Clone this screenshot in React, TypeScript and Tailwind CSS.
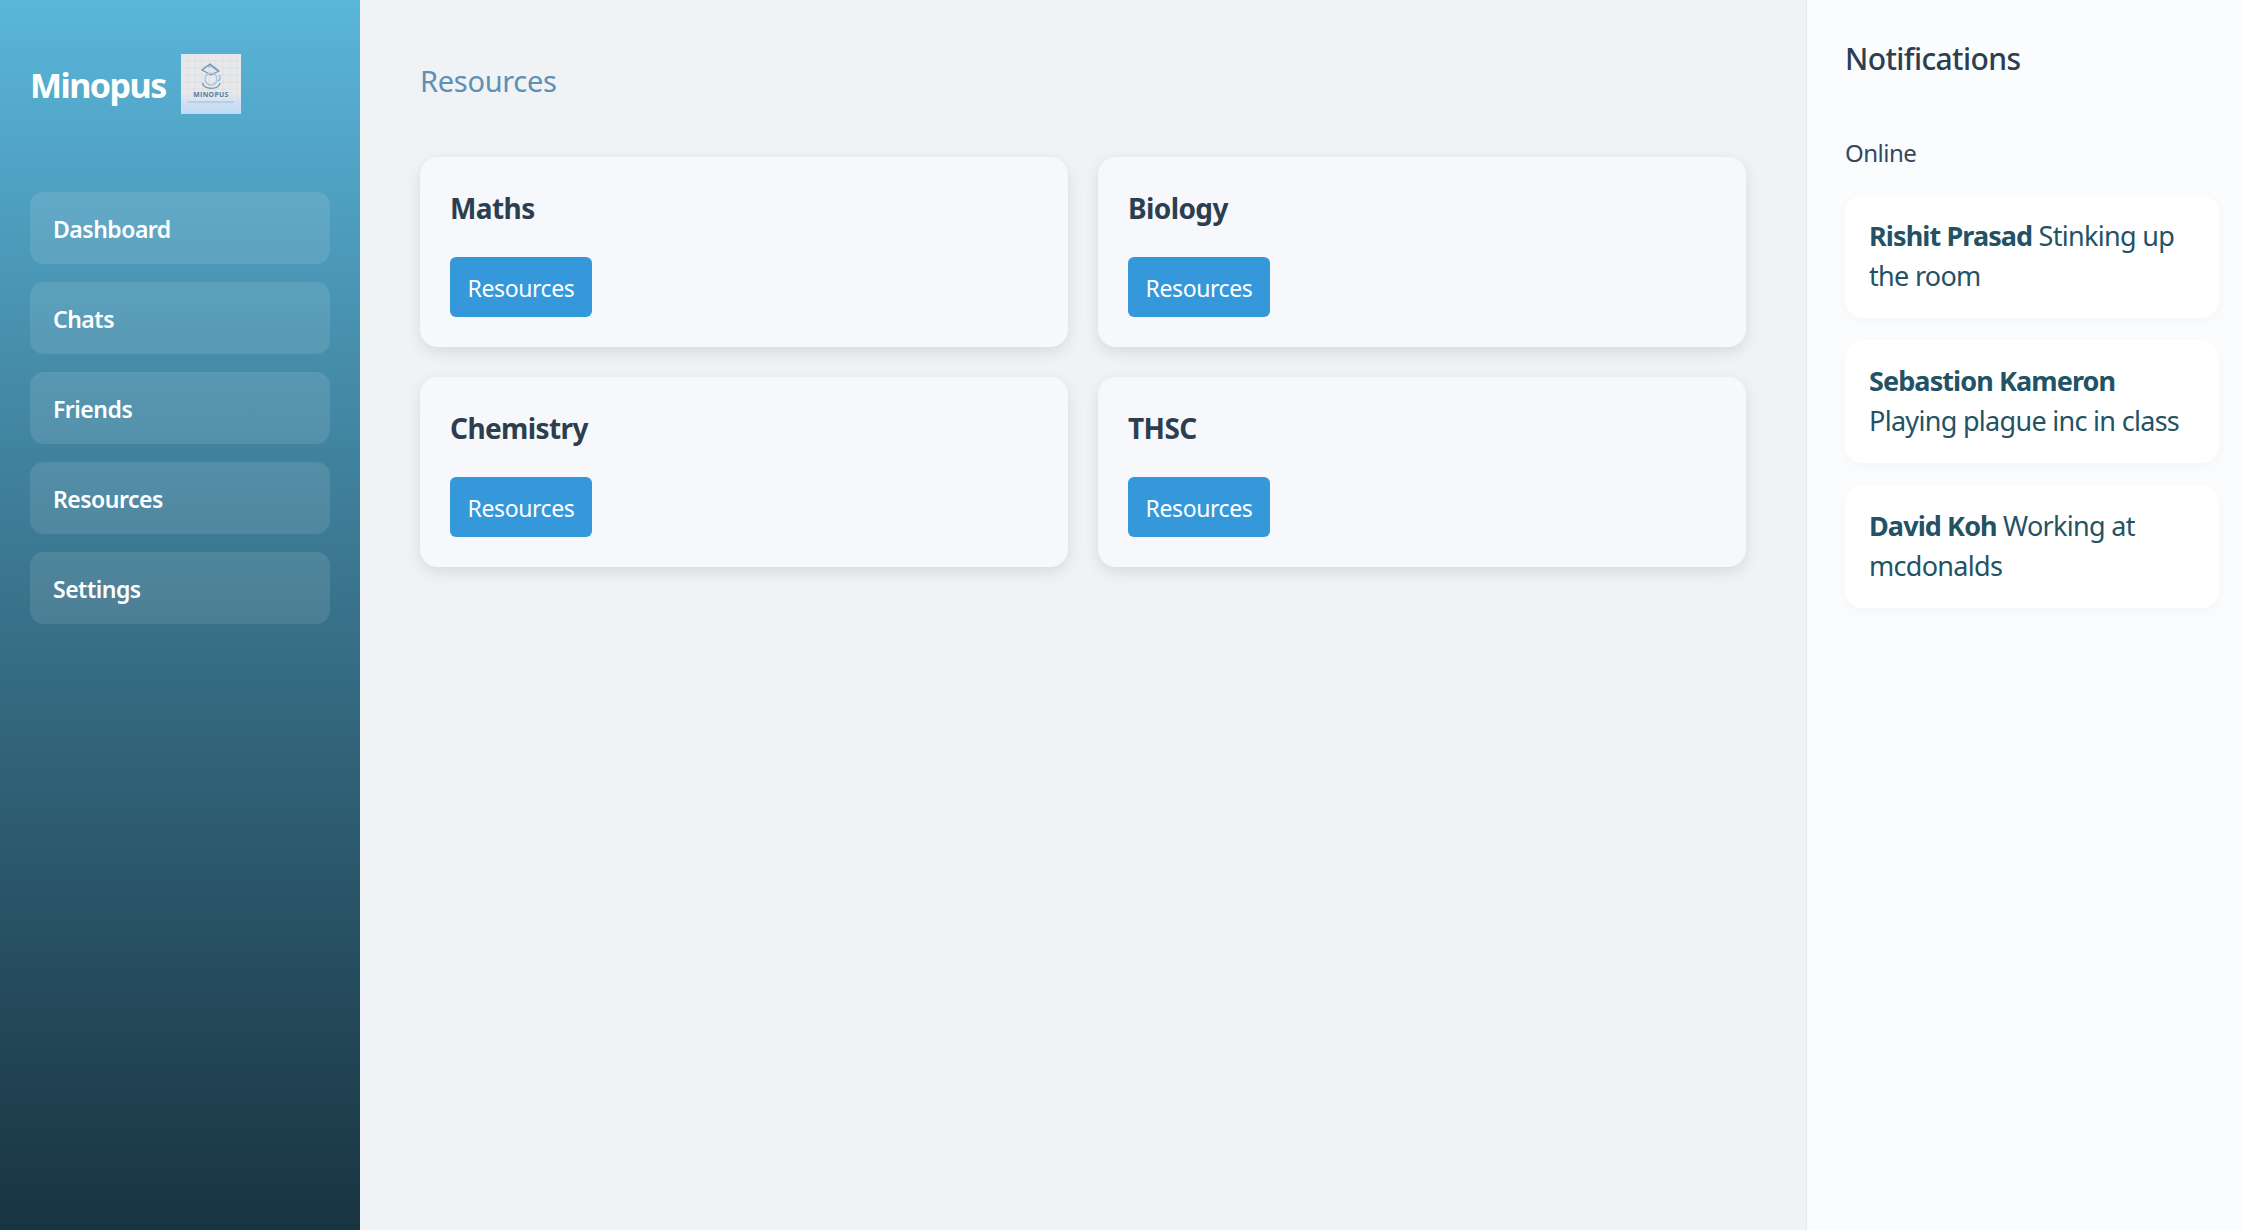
import React from 'react';

const navItems = ['Dashboard', 'Chats', 'Friends', 'Resources', 'Settings'];
const subjects = ['Maths', 'Biology', 'Chemistry', 'THSC'];
const online = [
  { name: 'Rishit Prasad', status: 'Stinking up the room' },
  { name: 'Sebastion Kameron', status: 'Playing plague inc in class' },
  { name: 'David Koh', status: 'Working at mcdonalds' },
];

const Logo: React.FC = () => (
  <svg width="60" height="60" viewBox="0 0 60 60" className="shrink-0">
    <defs>
      <linearGradient id="logoBg" x1="0" y1="0" x2="0" y2="1">
        <stop offset="0.7" stopColor="#e6e8ea" />
        <stop offset="0.8" stopColor="#cfe1f4" />
        <stop offset="1" stopColor="#bcdcfb" />
      </linearGradient>
    </defs>
    <rect width="60" height="60" fill="url(#logoBg)" />
    {[7, 14, 21, 28, 35, 42, 49, 56].map((p) => (
      <g key={p} stroke="#d8dadc" strokeWidth="0.5">
        <line x1={p} y1="0" x2={p} y2="60" />
        <line x1="0" y1={p} x2="60" y2={p} />
      </g>
    ))}
    <g fill="none" stroke="#6d8fae" strokeWidth="1.1">
      <path d="M21 16 L29 10 L38 17 L30 21 Z" />
      <path d="M23 13 L30 12 L38 18" stroke="#8aa9c4" />
      <circle cx="30" cy="25" r="6" stroke="#9cc2dc" />
      <path d="M38 21 C40 24 39 26 37 27" stroke="#6fb6dc" />
      <path d="M22 29 C20 35 38 37 39 29" stroke="#5d83a3" />
    </g>
    <text x="30" y="43" textAnchor="middle" fontSize="6.8" fontWeight="700" letterSpacing="0.4" fill="#4f7ea6" fontFamily="'Open Sans', sans-serif">MINOPUS</text>
    <rect x="7" y="47.5" width="46" height="1" fill="#9dbbd8" />
  </svg>
);

const App: React.FC = () => {
  return (
    <div className="flex h-[1230px] w-[2242px] overflow-hidden bg-[#eff3f6] font-['Noto_Sans',sans-serif]">
      <aside className="flex w-[360px] shrink-0 flex-col bg-gradient-to-b from-[#5ab6db] to-[#193441] px-[30px] pt-[54px]">
        <div className="flex h-[60px] items-center gap-[15px]">
          <span className="pt-[3px] text-[34px] font-bold leading-[57px] tracking-[-1.5px] text-white">Minopus</span>
          <Logo />
        </div>
        <nav className="mt-[78px] flex flex-col gap-[18px]">
          {navItems.map((item) => (
            <div
              key={item}
              className="flex h-[72px] items-center rounded-[14px] bg-white/10 px-[23px] pt-[3px] text-[23px] font-semibold tracking-[-0.5px] text-white"
            >
              {item}
            </div>
          ))}
        </nav>
      </aside>

      <main className="flex-1 px-[60px] pt-[58px]">
        <h1 className="text-[29px] font-normal leading-[45px] tracking-[-0.3px] text-[#5f8fb3]">Resources</h1>
        <div className="mt-[54px] grid grid-cols-2 gap-[30px]">
          {subjects.map((subject) => (
            <div key={subject} className="h-[190px] rounded-[18px] bg-[#f6f8fb] p-[30px] shadow-[0_5px_15px_rgba(0,0,0,0.1)]">
              <h3 className="pt-[2px] text-[28px] font-bold leading-[38px] tracking-[-0.6px] text-[#2c3e50]">{subject}</h3>
              <button className="mt-[30px] h-[60px] w-[142px] rounded-[6px] bg-[#3498db] pt-[3px] text-[23px] tracking-[-0.4px] text-white">
                Resources
              </button>
            </div>
          ))}
        </div>
      </main>

      <aside className="w-[436px] shrink-0 border-l border-[#e6eaee] bg-[#fbfcfe] pl-[38px] pr-[23px] pt-[37px]">
        <h2 className="text-[30px] font-medium leading-[44px] tracking-[-0.6px] text-[#2c3e50]">Notifications</h2>
        <div className="mt-[55px] text-[24px] leading-[34px] tracking-[-0.5px] text-[#34495e]">Online</div>
        <div className="mt-[25px] flex flex-col gap-[22px]">
          {online.map((person) => (
            <div key={person.name} className="h-[123px] rounded-[18px] bg-white px-[24px] py-[21px] text-[27px] leading-[40px] tracking-[-0.7px] text-[#235264] shadow-[0_4px_15px_rgba(0,0,0,0.03)]">
              <strong className="font-bold tracking-[-0.9px]">{person.name}</strong> {person.status}
            </div>
          ))}
        </div>
      </aside>
    </div>
  );
};

export default App;
